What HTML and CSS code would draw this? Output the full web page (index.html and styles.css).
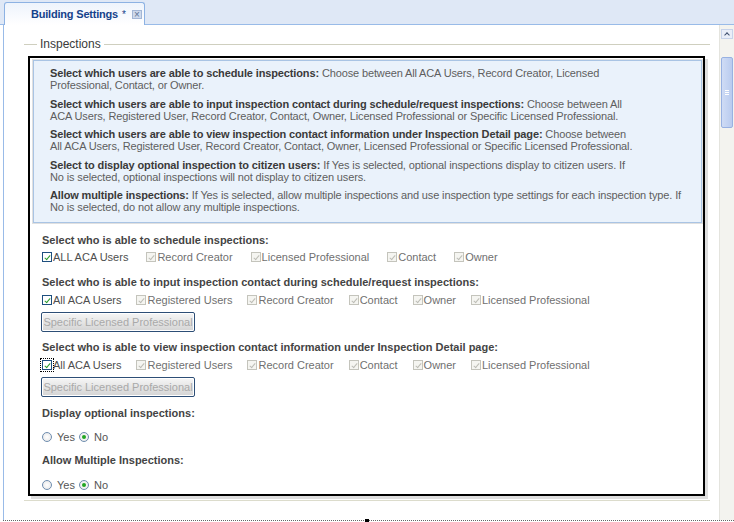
FILE: index.html
```html
<!DOCTYPE html>
<html lang="en">
<head>
<meta charset="UTF-8">
<title>Building Settings</title>
<link rel="stylesheet" href="styles.css">
</head>
<body>

<!-- Tab strip -->
<div class="tabbar">
  <div class="tab">
    <span class="tab-title">Building Settings</span>
    <span class="tab-star">*</span>
    <span class="tab-close">×</span>
  </div>
</div>

<div class="panel">
  <div class="panel-body">
    <div class="content">
      <fieldset class="group">
        <legend>Inspections</legend>
        <div class="frame">

          <!-- Help text -->
          <div class="info">
            <p><b>Select which users are able to schedule inspections:</b> Choose between All ACA Users, Record Creator, Licensed<br>Professional, Contact, or Owner.</p>
            <p><b>Select which users are able to input inspection contact during schedule/request inspections:</b> Choose between All<br>ACA Users, Registered User, Record Creator, Contact, Owner, Licensed Professional or Specific Licensed Professional.</p>
            <p><b>Select which users are able to view inspection contact information under Inspection Detail page:</b> Choose between<br>All ACA Users, Registered User, Record Creator, Contact, Owner, Licensed Professional or Specific Licensed Professional.</p>
            <p><b>Select to display optional inspection to citizen users:</b> If Yes is selected, optional inspections display to citizen users. If<br>No is selected, optional inspections will not display to citizen users.</p>
            <p><b>Allow multiple inspections:</b> If Yes is selected, allow multiple inspections and use inspection type settings for each inspection type. If<br>No is selected, do not allow any multiple inspections.</p>
          </div>

          <div class="fields">
            <div class="field-label l1">Select who is able to schedule inspections:</div>
            <div class="checks wide">
              <label class="chk"><span class="cb"></span>ALL ACA Users</label>
              <label class="chk off"><span class="cb"></span>Record Creator</label>
              <label class="chk off"><span class="cb"></span>Licensed Professional</label>
              <label class="chk off"><span class="cb"></span>Contact</label>
              <label class="chk off"><span class="cb"></span>Owner</label>
            </div>

            <div class="field-label l2">Select who is able to input inspection contact during schedule/request inspections:</div>
            <div class="checks">
              <label class="chk"><span class="cb"></span>All ACA Users</label>
              <label class="chk off"><span class="cb"></span>Registered Users</label>
              <label class="chk off"><span class="cb"></span>Record Creator</label>
              <label class="chk off"><span class="cb"></span>Contact</label>
              <label class="chk off"><span class="cb"></span>Owner</label>
              <label class="chk off"><span class="cb"></span>Licensed Professional</label>
            </div>
            <button class="btn" disabled>Specific Licensed Professional</button>

            <div class="field-label l3">Select who is able to view inspection contact information under Inspection Detail page:</div>
            <div class="checks">
              <label class="chk"><span class="cb focus"></span>All ACA Users</label>
              <label class="chk off"><span class="cb"></span>Registered Users</label>
              <label class="chk off"><span class="cb"></span>Record Creator</label>
              <label class="chk off"><span class="cb"></span>Contact</label>
              <label class="chk off"><span class="cb"></span>Owner</label>
              <label class="chk off"><span class="cb"></span>Licensed Professional</label>
            </div>
            <button class="btn" disabled>Specific Licensed Professional</button>

            <div class="field-label l4">Display optional inspections:</div>
            <div class="radios">
              <label class="rad"><span class="rd"></span>Yes</label>
              <label class="rad"><span class="rd on"></span>No</label>
            </div>

            <div class="field-label l4">Allow Multiple Inspections:</div>
            <div class="radios last">
              <label class="rad"><span class="rd"></span>Yes</label>
              <label class="rad"><span class="rd on"></span>No</label>
            </div>
          </div>

        </div>
      </fieldset>
    </div>

    <!-- Scrollbar -->
    <div class="scroll">
      <div class="scroll-up"></div>
      <div class="thumb"><span class="grip"></span></div>
    </div>
  </div>
  <div class="dots"></div>
</div>

</body>
</html>
```

FILE: styles.css
```css
* { box-sizing: border-box; }
body { margin: 0; width: 734px; height: 522px; overflow: hidden; background: #fff; font-family: "Liberation Sans", Arial, sans-serif; font-size: 11px; color: #555; }

/* tab strip */
.tabbar { height: 25px; background: #dfe8f6; border-bottom: 1px solid #99bbe8; padding-left: 4px; display: flex; align-items: flex-end; }
.tab { width: 141px; height: 23px; margin-bottom: -1px; padding-left: 26px; display: flex; align-items: center; background: linear-gradient(#eef4fc, #fff); border: 1px solid #8db2e3; border-bottom: none; border-radius: 3px 3px 0 0; }
.tab-title { font-weight: bold; font-size: 11px; color: #15428b; letter-spacing: -0.2px; }
.tab-star { margin-left: 4px; font-size: 10px; color: #15428b; }
.tab-close { margin-left: 6px; width: 10px; height: 9px; line-height: 8px; text-align: center; font-size: 10px; color: #5f7394; background: #cdd9ec; border: 1px solid #a3b6d5; }

/* panel */
.panel { height: 497px; margin-left: 3px; display: flex; flex-direction: column; }
.panel-body { flex: 1; display: flex; min-height: 0; border-left: 1px solid #99bbe8; }
.content { flex: 1; min-width: 0; padding: 12px 9px 0 20px; }
.dots { height: 2px; border-top: 1px dotted #666; position: relative; }
.dots::after { content: ""; position: absolute; left: 362px; top: -2px; width: 4px; height: 3px; background: #000; }

.group { min-width: 0; margin: 0; padding: 0 0 4px; border: none; border-top: 1px solid #cfcfbf; border-bottom: 1px solid #dcdccc; }
.group legend { margin-left: 13px; padding: 0 3px; font-size: 12px; line-height: 14px; color: #3a3a3a; }

.frame { margin: 5px 5px 0 4px; border: 2px solid #000; box-shadow: 3px 3px 0 #dedede; padding: 2px 1px 2px 3px; overflow: hidden; }

.info { background: #eaf2fb; border: 1px solid #a9c4e4; box-shadow: 0 0 0 1px #e0e0e0; padding: 6px 8px 9px 16px; }
.info p { margin: 0 0 6.5px; line-height: 12px; white-space: nowrap; color: #5e5e5e; letter-spacing: -0.13px; }
.info p:last-child { margin-bottom: 0; }
.info b { color: #3a3a3a; }

/* form fields */
.fields { padding-left: 9px; }
.field-label { font-weight: bold; line-height: 14px; color: #444; white-space: nowrap; }
.l1 { margin-top: 10px; }
.l2 { margin-top: 11px; }
.l3 { margin-top: 8px; }
.l4 { margin-top: 9px; }
.checks { display: flex; gap: 15px; line-height: 14px; margin-top: 4px; }
.checks.wide { gap: 18px; margin-top: 3px; }
.chk { display: flex; align-items: center; color: #4e4e4e; white-space: nowrap; }
.chk.off { color: #707070; }

.cb { position: relative; width: 10px; height: 10px; margin-right: 1px; border: 1px solid #1e4f7f; background: #fff; }
.chk.off .cb { border-color: #c4c4bc; background: #f5f5f1; }
.cb::after { content: ""; position: absolute; left: 3px; top: 1px; width: 2px; height: 5px; border: solid #2c9c2c; border-width: 0 1.5px 1.5px 0; transform: rotate(40deg); }
.chk.off .cb::after { border-color: #bdbdb6; }
.cb.focus { outline: 1px dotted #000; outline-offset: 1px; }

.btn { display: block; width: 154px; height: 20px; margin: 5px 0 0 -1px; padding: 0; border: 1px solid #2d4e76; border-radius: 2px; background: linear-gradient(#f6f6f6, #d4d4d4); box-shadow: inset 0 0 0 1px #fff; color: #a9a9a9; font: 11px "Liberation Sans", Arial, sans-serif; }

.radios { display: flex; gap: 4px; line-height: 14px; margin-top: 10px; }
.radios.last { margin-top: 11px; }
.rad { display: flex; align-items: center; color: #555; }
.rd { position: relative; width: 10px; height: 10px; margin-right: 5px; border-radius: 50%; border: 1px solid #6e8daf; background: radial-gradient(#fff, #e4e4e4); }
.rd.on::after { content: ""; position: absolute; left: 2px; top: 2px; width: 4px; height: 4px; border-radius: 50%; background: #22a622; }

/* scrollbar */
.scroll { flex: none; width: 15px; background: #f3f3ef; border-left: 1px solid #e4e4de; padding: 4px 0 0 1px; }
.scroll-up { position: relative; width: 12px; height: 10px; background: #e9eef8; border: 1px solid #c7d3ea; }
.scroll-up::after { content: ""; position: absolute; left: 3px; top: 3px; width: 3px; height: 3px; border: solid #3d4f6e; border-width: 1px 0 0 1px; transform: rotate(45deg); }
.thumb { width: 12px; height: 71px; margin-top: 18px; display: flex; align-items: center; justify-content: center; background: linear-gradient(90deg, #cfdcf5, #b9cbef); border: 1px solid #98b1e2; border-radius: 2px; }
.grip { width: 4px; height: 5px; background: repeating-linear-gradient(#fff 0 1px, transparent 1px 2px); }
```
